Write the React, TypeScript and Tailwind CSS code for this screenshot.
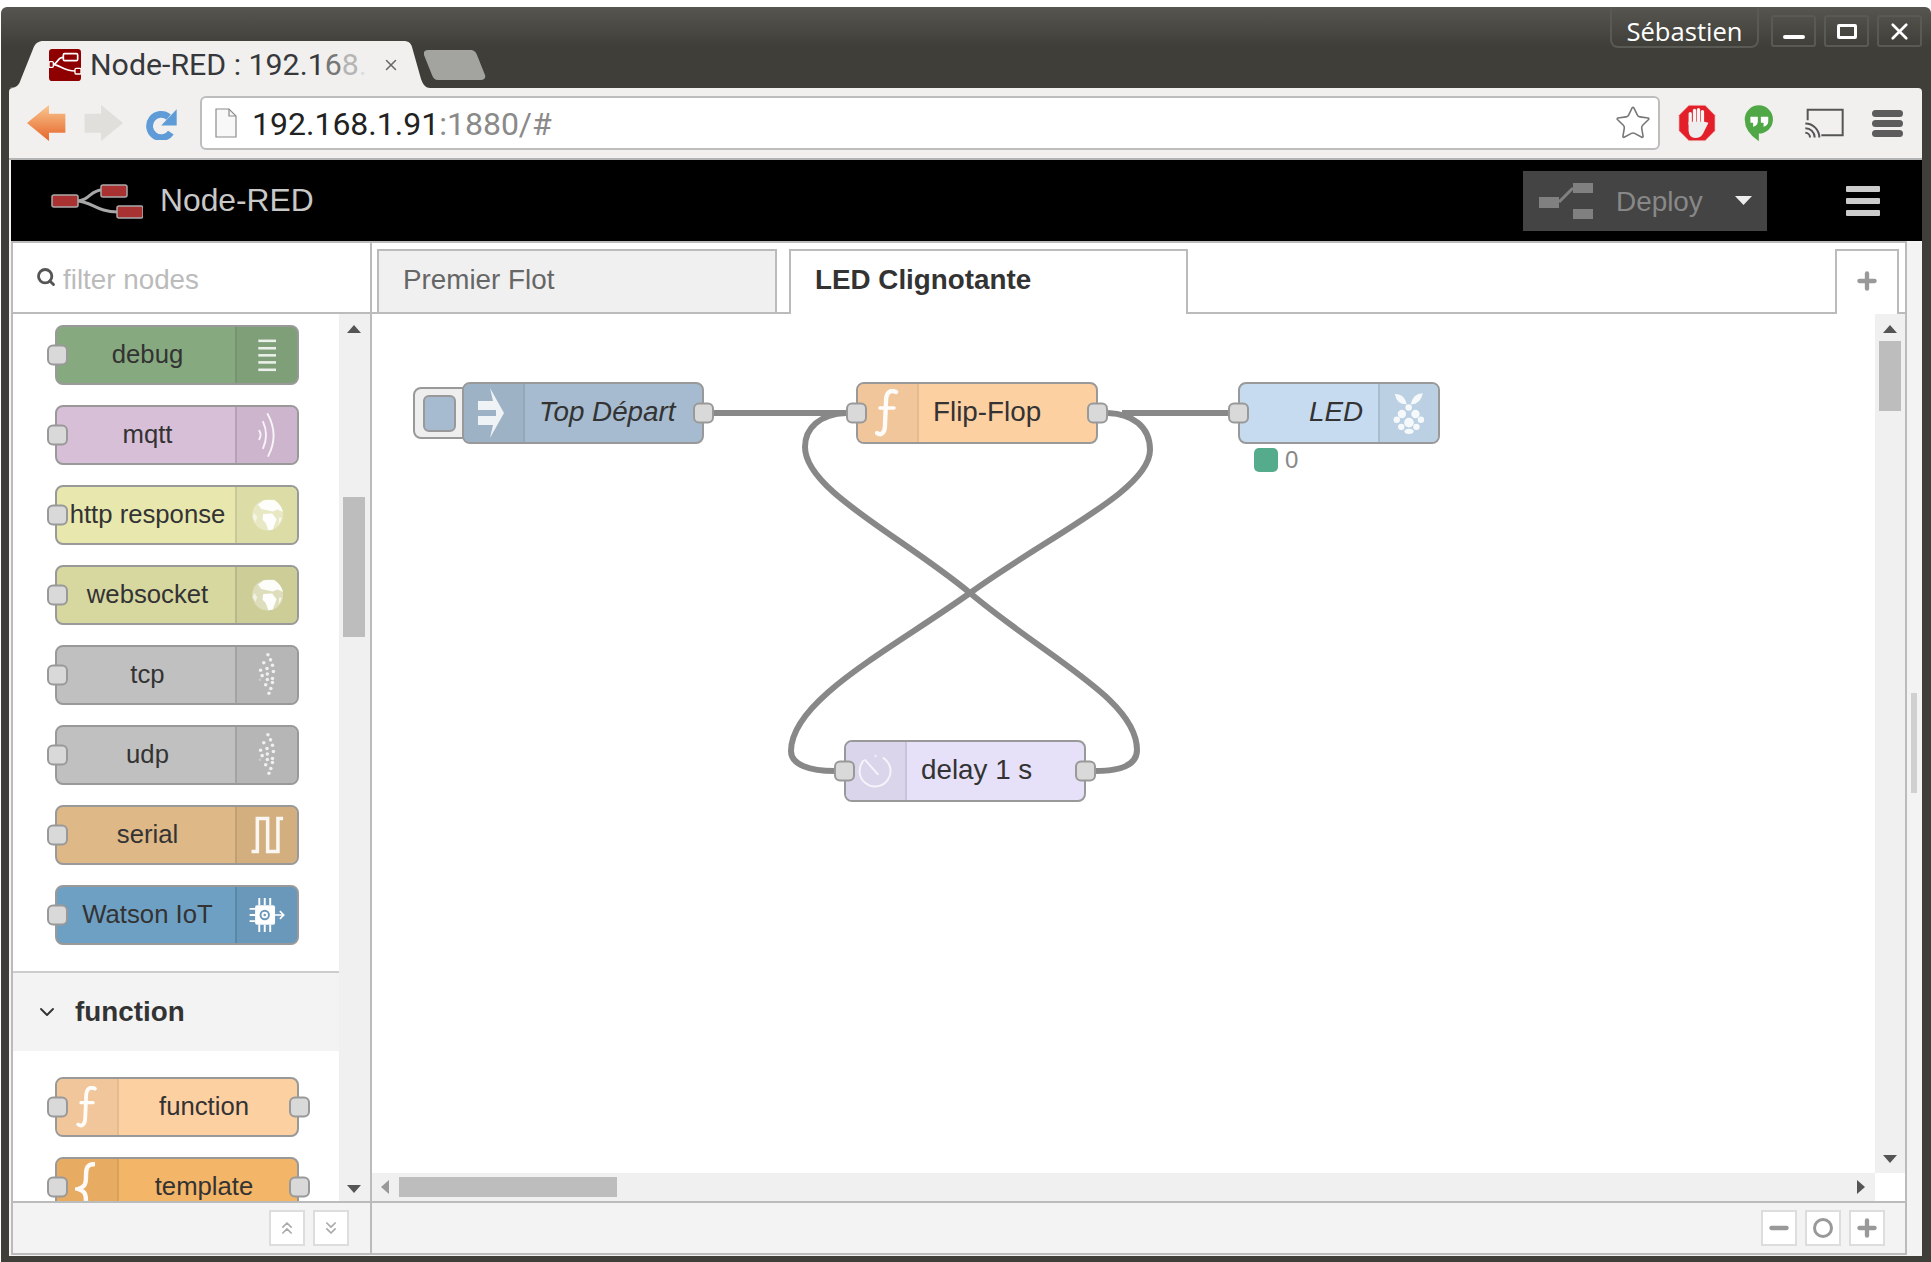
import type { ReactNode } from "react";
import { ChevronDown, ChevronsDown, ChevronsUp, Minus, Plus, Search, Star, X } from "lucide-react";

// Icons are drawn in the coordinates they were measured in, hence the odd viewBoxes.
function FuncIcon({ className }: { className: string }) {
  return (
    <svg viewBox="0 0 24 48" className={className} fill="none" stroke="white" strokeLinecap="round" opacity="0.95">
      <path d="M21 3 C15 0 11 4 11 12 L10 36 C10 44 6 47 2 44" strokeWidth="4.4" />
      <path d="M5 19 H19" strokeWidth="3.6" />
    </svg>
  );
}

function BraceIcon() {
  return (
    <svg viewBox="0 0 24 60" className="mt-[10px] h-[60px] w-[24px]" fill="none" stroke="white" strokeWidth="4.4" opacity="0.95">
      <path d="M20 2 C12 2 11 6 11 14 C11 22 10 25 3 27 C10 29 11 32 11 40 C11 50 12 58 20 58" />
    </svg>
  );
}

function DebugIcon() {
  return (
    <svg viewBox="707 48 186 174" className="h-full w-full" fill="white" opacity="0.85">
      <rect x="773" y="87" width="55" height="8" />
      <rect x="773" y="110" width="55" height="8" />
      <rect x="773" y="132" width="55" height="8" />
      <rect x="773" y="154" width="55" height="8" />
      <rect x="773" y="177" width="55" height="8" />
    </svg>
  );
}

function MqttIcon() {
  return (
    <svg viewBox="707 288 186 174" className="h-full w-full" fill="none" stroke="white" opacity="0.85" strokeLinecap="round">
      <path d="M776 362 Q784 375 776 388" strokeWidth="6" />
      <path d="M788 334 Q806 375 788 416" strokeWidth="6" />
      <path d="M802 310 Q838 375 804 440" strokeWidth="6" />
    </svg>
  );
}

function GlobeIcon() {
  return (
    <svg viewBox="707 528 186 174" className="h-full w-full" fill="white">
      <circle cx="802" cy="615" r="48" opacity="0.35" />
      <path d="M790 569 L822 568 Q844 582 850 606 L832 598 L818 604 L800 600 L782 596 L772 582 Z" opacity="0.9" />
      <path d="M788 612 L816 610 L830 628 L818 660 L804 662 L796 640 L786 630 Z" opacity="0.95" />
      <path d="M760 608 L770 622 L764 636 L756 622 Z" opacity="0.6" />
      <path d="M838 622 L846 624 L836 646 Z" opacity="0.7" />
    </svg>
  );
}

const DOTS = [
  [803, 42], [790, 67], [811, 58], [817, 75], [800, 85], [780, 90], [820, 94], [785, 107],
  [801, 102], [817, 116], [801, 119], [796, 135], [817, 128], [812, 147], [806, 162],
];

function DotsIcon() {
  return (
    <svg viewBox="707 18 186 174" className="h-full w-full" fill="white" opacity="0.8">
      {DOTS.map(([x, y]) => (
        <circle key={`${x}-${y}`} cx={x} cy={y} r="5.5" />
      ))}
      <circle cx="778" cy="120" r="4" opacity="0.4" />
    </svg>
  );
}

function SerialIcon() {
  return (
    <svg viewBox="707 498 186 174" className="h-full w-full" fill="none" stroke="white" strokeWidth="11" opacity="0.9">
      <path d="M752 636 H770 V534 H802 V636 H834 V534 H850" />
    </svg>
  );
}

function WatsonIcon() {
  return (
    <svg viewBox="707 738 186 174" className="h-full w-full">
      <rect x="763" y="795" width="62" height="60" rx="6" fill="white" />
      <path
        d="M776 772 V795 M793 772 V795 M810 772 V795 M776 855 V878 M793 855 V878 M810 855 V878 M746 806 H763 M746 825 H763 M746 844 H763"
        stroke="white"
        strokeWidth="6"
      />
      <circle cx="793" cy="825" r="13" fill="none" stroke="#6998ba" strokeWidth="6" />
      <circle cx="793" cy="825" r="4" fill="#6998ba" />
      <path d="M825 825 H850 M840 813 L852 825 L840 837" fill="none" stroke="white" strokeWidth="5" />
    </svg>
  );
}

function InjectIcon() {
  return (
    <svg viewBox="0 0 30 50" className="h-[50px] w-[30px]" fill="white" opacity="0.85">
      <path d="M14 0 L28 25 L14 50 L17 37 H2 V28 H20 V22 H2 V13 H17 Z" />
    </svg>
  );
}

function RaspberryIcon() {
  return (
    <svg viewBox="537 70 180 174" className="h-full w-full" fill="white" opacity="0.88">
      <path d="M583 98 Q612 96 620 130 Q590 132 583 98 Z" />
      <path d="M670 96 Q640 96 632 130 Q662 132 670 96 Z" />
      <circle cx="626" cy="140" r="10" />
      <circle cx="605" cy="160" r="13" />
      <circle cx="647" cy="160" r="13" />
      <circle cx="589" cy="178" r="10" />
      <circle cx="664" cy="178" r="10" />
      <circle cx="627" cy="187" r="15" />
      <circle cx="603" cy="200" r="10" />
      <circle cx="650" cy="200" r="10" />
      <ellipse cx="627" cy="214" rx="14" ry="8" />
    </svg>
  );
}

function TimerIcon() {
  return (
    <svg viewBox="225 92 180 180" className="h-full w-full" fill="none" stroke="white" opacity="0.75" strokeLinecap="round">
      <path d="M340 142 A48 48 0 1 1 278 150" strokeWidth="6" />
      <path d="M283 148 L322 192" strokeWidth="6" />
      <circle cx="315" cy="135" r="3" fill="white" />
    </svg>
  );
}

function Triangle({ points, className }: { points: string; className: string }) {
  return (
    <svg viewBox="0 0 16 16" preserveAspectRatio="none" className={className}>
      <polygon points={points} fill="currentColor" />
    </svg>
  );
}

function Port({ className }: { className: string }) {
  return (
    <div
      className={
        "absolute top-1/2 z-10 h-[21px] w-[21px] -translate-y-1/2 rounded-[6px] border-2 border-[#999] bg-[#d9d9d9] " +
        className
      }
    />
  );
}

type PaletteItem = {
  label: string;
  color: string;
  iconCell: string;
  icon: ReactNode;
};

const OUTPUT_NODES: PaletteItem[] = [
  { label: "debug", color: "bg-[#87a980]", iconCell: "bg-[#7f9f79] border-[#769472]", icon: <DebugIcon /> },
  { label: "mqtt", color: "bg-[#d8bfd8]", iconCell: "bg-[#cdb5cd] border-[#b5a3b5]", icon: <MqttIcon /> },
  { label: "http response", color: "bg-[#e7e7ae]", iconCell: "bg-[#dcdca6] border-[#c8c89b]", icon: <GlobeIcon /> },
  { label: "websocket", color: "bg-[#d7d7a0]", iconCell: "bg-[#cdcd98] border-[#b8b88f]", icon: <GlobeIcon /> },
  { label: "tcp", color: "bg-[#c0c0c0]", iconCell: "bg-[#b6b6b6] border-[#a3a3a3]", icon: <DotsIcon /> },
  { label: "udp", color: "bg-[#c0c0c0]", iconCell: "bg-[#b6b6b6] border-[#a3a3a3]", icon: <DotsIcon /> },
  { label: "serial", color: "bg-[#deb887]", iconCell: "bg-[#d3af80] border-[#c09f75]", icon: <SerialIcon /> },
  { label: "Watson IoT", color: "bg-[#6ea0c4]", iconCell: "bg-[#6998ba] border-[#5c88a8]", icon: <WatsonIcon /> },
];

function OutputNode({ item }: { item: PaletteItem }) {
  return (
    <div className={"relative ml-[42px] flex h-[60px] w-[244px] flex-none rounded-[8px] border-2 border-[#999] " + item.color}>
      <Port className="-left-[10px]" />
      <div className="flex flex-1 items-center justify-center pb-[2px] pl-[3px] text-[25.7px] text-[#333]">{item.label}</div>
      <div className={"h-full w-[62px] rounded-r-[6px] border-l-2 " + item.iconCell}>{item.icon}</div>
    </div>
  );
}

function FunctionNode({ label, color, iconCell, icon }: PaletteItem) {
  return (
    <div className={"relative ml-[42px] flex h-[60px] w-[244px] flex-none rounded-[8px] border-2 border-[#999] " + color}>
      <Port className="-left-[10px]" />
      <Port className="-right-[13px]" />
      <div className={"flex h-full w-[62px] items-center justify-center rounded-l-[6px] border-r-2 " + iconCell}>{icon}</div>
      <div className="flex flex-1 items-center justify-center pb-[2px] pr-[8px] text-[25.7px] text-[#333]">{label}</div>
    </div>
  );
}

function SquareButton({ children }: { children: ReactNode }) {
  return (
    <div className="flex h-[36px] w-[36px] items-center justify-center border-2 border-[#ddd] bg-white text-[#999]">{children}</div>
  );
}

function TitleBar() {
  return (
    <div className="flex h-[81px] flex-none">
      <div className="relative ml-[8px] mt-[34px] flex h-[47px] w-[421px] items-start pl-[40px] pt-[8px]">
        <svg viewBox="0 0 421 47" className="absolute inset-0 h-full w-full">
          <path
            d="M0 47 C8 47 10 44 12 38 L24 8 C26 2 30 0 34 0 L395 0 C399 0 402 2 403 6 L412 38 C414 44 417 47 421 47 Z"
            fill="#f1f0ee"
          />
        </svg>
        <svg viewBox="147 57 96 96" className="relative h-[32px] w-[32px]">
          <rect x="147" y="57" width="96" height="96" rx="10" fill="#8f0000" />
          <path
            d="M158 103 C175 103 170 82 190 82 M158 103 C178 103 190 123 225 123"
            fill="none"
            stroke="white"
            strokeWidth="5"
          />
          <rect x="190" y="71" width="43" height="21" rx="4" fill="#8f0000" stroke="white" strokeWidth="5" />
          <rect x="147" y="95" width="13" height="17" rx="3" fill="#8f0000" stroke="white" strokeWidth="4" />
          <rect x="225" y="115" width="18" height="17" rx="3" fill="#8f0000" stroke="white" strokeWidth="4" />
        </svg>
        <span className="relative ml-[9px] whitespace-nowrap font-['Roboto',sans-serif] text-[30.3px] leading-[32px] text-[#36383c]">
          Node-RED : 192.1<span className="text-[#777]">6</span>
          <span className="text-[#b5b5b5]">8</span>
          <span className="text-[#ddd]">.</span>
        </span>
        <X className="absolute left-[373px] top-[15px] h-[18px] w-[18px] text-[#666]" strokeWidth={2} />
      </div>
      <svg viewBox="0 0 62 30" className="ml-[-6px] mt-[43px] h-[30px] w-[62px]">
        <path d="M4 0 H46 C50 0 52 2 53 5 L61 25 C62 28 60 30 57 30 H14 C11 30 9 28 8 25 L0 5 C-1 2 1 0 4 0 Z" fill="#a3a3a0" />
      </svg>
      <div className="ml-auto flex items-start font-['Open_Sans',sans-serif]">
        <div className="flex h-[41px] w-[149px] items-center justify-center rounded-b-[8px] border-2 border-t-0 border-[#5a5a54] pt-[11px] text-[25.6px] text-white">
          Sébastien
        </div>
        <div className="ml-[12px] mt-[8px] flex gap-[8px] pr-[9px]">
          <div className="flex h-[32px] w-[45px] items-end justify-center rounded-[3px] border-2 border-[#5a5a54] pb-[6px]">
            <div className="h-[4px] w-[22px] rounded-sm bg-white" />
          </div>
          <div className="flex h-[32px] w-[45px] items-center justify-center rounded-[3px] border-2 border-[#5a5a54]">
            <div className="h-[15px] w-[20px] rounded-[2px] border-[3px] border-white" />
          </div>
          <div className="flex h-[32px] w-[45px] items-center justify-center rounded-[3px] border-2 border-[#5a5a54]">
            <X className="h-[27px] w-[27px] text-white" strokeWidth={2.4} />
          </div>
        </div>
      </div>
    </div>
  );
}

function Toolbar() {
  return (
    <div className="ml-[8px] flex h-[72px] w-[1913px] flex-none items-center rounded-t-[4px] border-b-2 border-[#b4b4b4] bg-[#f1f0ee] pl-[17px]">
      <svg viewBox="75 220 125 120" className="h-[40px] w-[41px] flex-none">
        <defs>
          <linearGradient id="back" x1="0" y1="0" x2="0" y2="1">
            <stop offset="0" stopColor="#f9c78f" />
            <stop offset="1" stopColor="#e6642a" />
          </linearGradient>
        </defs>
        <polygon points="78,280 145,225 145,252 195,252 195,310 145,310 145,335" fill="url(#back)" />
      </svg>
      <svg viewBox="250 220 125 120" className="ml-[16px] h-[40px] w-[41px] flex-none">
        <polygon points="372,280 305,225 305,252 255,252 255,310 305,310 305,335" fill="#e0dfdc" />
      </svg>
      <svg viewBox="432 232 102 100" className="ml-[21px] h-[33px] w-[33px] flex-none">
        <path d="M505 262 A36 36 0 1 0 512 310" fill="none" stroke="#5f9bd6" strokeWidth="21" />
        <polygon points="530,238 530,288 482,288" fill="#5f9bd6" />
      </svg>
      <div className="ml-[22px] flex h-[54px] w-[1460px] flex-none items-center rounded-[6px] border-2 border-[#bdbdbd] bg-white pl-[13px] pr-[6px] font-['Roboto',sans-serif]">
        <svg viewBox="0 0 22 30" className="h-[30px] w-[22px] flex-none">
          <path d="M1 1 H14 L21 8 V29 H1 Z" fill="#f8f8f8" stroke="#8c8c8c" strokeWidth="1.2" />
          <path d="M14 1 V8 H21" fill="none" stroke="#8c8c8c" strokeWidth="1.2" />
        </svg>
        <span className="ml-[15px] pt-[2px] text-[32px] leading-none text-[#222]">
          192.168.1.91<span className="text-[#8a8a8a]">:1880/#</span>
        </span>
        <Star className="ml-auto h-[38px] w-[38px] text-[#777]" strokeWidth={1} />
      </div>
      <svg viewBox="50 32 115 113" className="ml-[18px] h-[38px] w-[38px] flex-none">
        <polygon points="83,35 132,35 162,65 162,112 132,142 83,142 53,112 53,65" fill="#e3202a" stroke="#f3c0c0" strokeWidth="2" />
        <path
          d="M87 60 V92 M100 50 V90 M112 48 V90 M124 54 V92"
          stroke="#f4f4f4"
          strokeWidth="10"
          strokeLinecap="round"
        />
        <path d="M82 85 H130 L142 88 L126 120 Q118 134 102 134 Q84 134 82 112 Z" fill="#eeeeee" />
      </svg>
      <svg viewBox="250 32 95 113" className="ml-[27px] h-[38px] w-[32px] flex-none">
        <path d="M297 36 A42 42 0 0 1 297 120 V143 Q255 115 255 78 A42 42 0 0 1 297 36 Z" fill="#4fa845" />
        <path d="M272 70 H294 V84 Q294 96 280 100 V88 H272 Z M303 70 H325 V84 Q325 96 311 100 V88 H303 Z" fill="white" />
      </svg>
      <svg viewBox="432 42 120 92" className="ml-[29px] h-[31px] w-[40px] flex-none">
        <path d="M443 78 V47 H548 V123 H484" fill="none" stroke="#555" strokeWidth="6" />
        <path d="M436 88 A42 42 0 0 1 478 130 M436 102 A28 28 0 0 1 464 130 M436 116 A14 14 0 0 1 450 130" fill="none" stroke="#555" strokeWidth="6" />
      </svg>
      <div className="ml-[28px] flex w-[31px] flex-none flex-col gap-[3px]">
        <div className="h-[7px] rounded-full bg-[#5c5c5c]" />
        <div className="h-[7px] rounded-full bg-[#5c5c5c]" />
        <div className="h-[7px] rounded-full bg-[#5c5c5c]" />
      </div>
    </div>
  );
}

function AppHeader() {
  return (
    <div className="ml-[8px] flex h-[81px] w-[1913px] flex-none items-center border-l-2 border-[#f3f3f3] bg-black pl-[40px] pr-[42px]">
      <svg viewBox="51 185 92 36" className="h-[36px] w-[92px] flex-none">
        <path d="M76 203 C90 203 90 192 102 192 M76 203 C92 203 96 214 118 214" fill="none" stroke="#a8a8a8" strokeWidth="3" />
        <rect x="52" y="197" width="26" height="12" rx="2" fill="#a83232" stroke="#aaa" strokeWidth="1.5" />
        <rect x="101" y="187" width="26" height="12" rx="2" fill="#a83232" stroke="#aaa" strokeWidth="1.5" />
        <rect x="117" y="208" width="26" height="12" rx="2" fill="#a83232" stroke="#aaa" strokeWidth="1.5" />
      </svg>
      <span className="ml-[17px] text-[31.8px] text-[#c8c8c8]">Node-RED</span>
      <div className="ml-auto flex h-[60px] w-[244px] items-center bg-[#444] pl-[16px] text-[27.9px] text-[#888]">
        <svg viewBox="0 0 54 36" className="h-[36px] w-[54px] flex-none" fill="#808080">
          <rect x="0" y="14" width="20" height="11" />
          <rect x="34" y="0" width="20" height="10" />
          <rect x="34" y="26" width="20" height="10" />
          <path d="M20 19 L34 5" stroke="#808080" strokeWidth="3" />
        </svg>
        <span className="ml-[23px] pt-[2px]">Deploy</span>
        <Triangle points="0,0 16,0 8,16" className="ml-[32px] h-[9px] w-[17px] text-[#eee]" />
      </div>
      <div className="ml-[79px] flex w-[34px] flex-col gap-[6px]">
        <div className="h-[6px] rounded-[1px] bg-[#ccc]" />
        <div className="h-[6px] rounded-[1px] bg-[#ccc]" />
        <div className="h-[6px] rounded-[1px] bg-[#ccc]" />
      </div>
    </div>
  );
}

function Sidebar() {
  return (
    <div className="flex w-[359px] flex-none flex-col border-r-2 border-[#bbb]">
      <div className="flex h-[71px] flex-none items-center border-b-2 border-[#bbb] bg-white pl-[23px] text-[27.8px] text-[#bbb]">
        <Search className="-mt-[2px] h-[20px] w-[20px] text-[#555]" strokeWidth={3.4} />
        <span className="ml-[7px] mt-[4px]">filter nodes</span>
      </div>
      <div className="flex h-[887px] flex-none">
        <div className="w-[326px] flex-none overflow-hidden bg-white pt-[11px]">
          <div className="flex flex-col gap-[20px]">
            {OUTPUT_NODES.map((item) => (
              <OutputNode key={item.label} item={item} />
            ))}
          </div>
          <div className="mt-[26px] flex h-[80px] items-center border-t-2 border-[#ccc] bg-[#f3f3f3] pl-[22px] text-[#333]">
            <ChevronDown className="h-[24px] w-[24px]" strokeWidth={1.9} />
            <span className="ml-[16px] text-[27.8px] font-bold">function</span>
          </div>
          <div className="mt-[26px] flex flex-col gap-[20px]">
            <FunctionNode label="function" color="bg-[#fdd0a2]" iconCell="bg-[#f0c69a] border-[#e4bc92]" icon={<FuncIcon className="h-[42px] w-[22px]" />} />
            <FunctionNode label="template" color="bg-[#f3b567]" iconCell="bg-[#e7ac62] border-[#d9a25b]" icon={<BraceIcon />} />
          </div>
        </div>
        <div className="flex w-[31px] flex-none flex-col items-center bg-[#f0f0f0] pb-[8px] pr-[2px] pt-[11px] text-[#555]">
          <Triangle points="8,0 16,16 0,16" className="h-[8px] w-[14px]" />
          <div className="mt-[164px] h-[140px] w-[22px] bg-[#bdbdbd]" />
          <Triangle points="0,0 16,0 8,16" className="mt-auto h-[8px] w-[14px]" />
        </div>
      </div>
      <div className="flex h-[52px] flex-none items-center justify-end gap-[8px] border-t-2 border-[#bbb] bg-[#f3f3f3] pr-[21px]">
        <SquareButton>
          <ChevronsUp className="h-[20px] w-[20px] text-[#aaa]" strokeWidth={2} />
        </SquareButton>
        <SquareButton>
          <ChevronsDown className="h-[20px] w-[20px] text-[#aaa]" strokeWidth={2} />
        </SquareButton>
      </div>
    </div>
  );
}

function Wires() {
  return (
    <svg className="absolute inset-0 h-full w-full" fill="none" stroke="#888" strokeWidth="6">
      <g transform="translate(-372 -314)">
        <path d="M714 413 H846" />
        <path d="M1122 413 H1228" />
        <path d="M1108 413 C1132 414 1150 426 1150 450 C1150 490 1050 535 970 593 C890 650 791 700 791 751 C791 765 810 771 835 771" />
        <path d="M846 413 C820 414 805 428 805 447 C805 490 900 535 970 593 C1050 660 1137 700 1137 750 C1137 765 1120 771 1095 771" />
      </g>
    </svg>
  );
}

function FlowNode({
  className,
  children,
}: {
  className: string;
  children: ReactNode;
}) {
  return (
    <div className={"absolute flex h-[62px] rounded-[8px] border-2 border-[#999] text-[27.8px] text-[#333] " + className}>
      {children}
    </div>
  );
}

function Canvas() {
  return (
    <div className="relative flex-1 overflow-hidden bg-white">
      <Wires />

      <div className="absolute left-[41px] top-[73px] flex h-[52px] w-[56px] items-center rounded-l-[8px] border-2 border-[#999] bg-[#eee] pl-[8px]">
        <div className="h-[37px] w-[33px] rounded-[6px] border-2 border-[#999] bg-[#a6bbcf]" />
      </div>
      <FlowNode className="left-[90px] top-[68px] w-[242px] bg-[#a6bbcf]">
        <Port className="-right-[12px]" />
        <div className="flex h-full w-[61px] flex-none items-center justify-center rounded-l-[6px] border-r-2 border-[#94a8bb] bg-[#9eb2c5] pr-[6px]">
          <InjectIcon />
        </div>
        <span className="ml-[14px] self-center pb-[2px] italic">Top Départ</span>
      </FlowNode>

      <FlowNode className="left-[484px] top-[68px] w-[242px] bg-[#fdd0a2]">
        <Port className="-left-[12px]" />
        <Port className="-right-[12px]" />
        <div className="flex h-full w-[61px] flex-none items-center justify-center rounded-l-[6px] border-r-2 border-[#e4bc92] bg-[#f0c69a] pr-[2px]">
          <FuncIcon className="h-[48px] w-[24px]" />
        </div>
        <span className="ml-[14px] self-center pb-[2px]">Flip-Flop</span>
      </FlowNode>

      <FlowNode className="left-[866px] top-[68px] w-[202px] bg-[#c6dbef]">
        <Port className="-left-[12px]" />
        <div className="flex flex-1 items-center justify-end pb-[2px] pr-[15px] italic">LED</div>
        <div className="h-full w-[60px] flex-none rounded-r-[6px] border-l-2 border-[#a9bdd1] bg-[#bcd0e3]">
          <RaspberryIcon />
        </div>
      </FlowNode>
      <div className="absolute left-[882px] top-[134px] flex items-center">
        <div className="h-[24px] w-[24px] rounded-[5px] bg-[#55ac8c]" />
        <span className="ml-[7px] text-[24px] leading-[24px] text-[#888]">0</span>
      </div>

      <FlowNode className="left-[472px] top-[426px] w-[242px] bg-[#e6e0f8]">
        <Port className="-left-[12px]" />
        <Port className="-right-[12px]" />
        <div className="h-full w-[61px] flex-none rounded-l-[6px] border-r-2 border-[#c9c3da] bg-[#dbd5ec]">
          <TimerIcon />
        </div>
        <span className="ml-[14px] self-center pb-[2px]">delay 1 s</span>
      </FlowNode>
    </div>
  );
}

function Workspace() {
  return (
    <div className="flex min-w-0 flex-1 flex-col">
      <div className="flex h-[71px] flex-none items-end gap-[12px] border-b-2 border-[#bbb] bg-white pl-[5px] text-[27.8px]">
        <div className="flex h-[63px] w-[400px] items-center border-2 border-b-0 border-[#bbb] bg-[#f0f0f0] pb-[4px] pl-[24px] text-[#666]">
          Premier Flot
        </div>
        <div className="-mb-[2px] flex h-[65px] w-[399px] items-center border-2 border-b-0 border-[#bbb] bg-white pb-[6px] pl-[24px] font-bold text-[#333]">
          LED Clignotante
        </div>
        <div className="-mb-[2px] ml-auto mr-[6px] flex h-[65px] w-[64px] items-center justify-center border-2 border-b-0 border-[#bbb] bg-white pb-[3px] text-[#999]">
          <Plus className="h-[26px] w-[26px]" strokeWidth={4} />
        </div>
      </div>
      <div className="flex h-[859px] flex-none">
        <Canvas />
        <div className="flex w-[30px] flex-none flex-col items-center bg-[#f0f0f0] pb-[10px] pt-[11px] text-[#555]">
          <Triangle points="8,0 16,16 0,16" className="h-[8px] w-[14px]" />
          <div className="mt-[8px] h-[70px] w-[22px] bg-[#bdbdbd]" />
          <Triangle points="0,0 16,0 8,16" className="mt-auto h-[8px] w-[14px]" />
        </div>
      </div>
      <div className="flex h-[28px] flex-none">
        <div className="flex flex-1 items-center bg-[#f0f0f0] pl-[9px] pr-[10px]">
          <Triangle points="16,0 16,16 0,8" className="h-[14px] w-[8px] text-[#999]" />
          <div className="ml-[10px] h-[20px] w-[218px] bg-[#bdbdbd]" />
          <Triangle points="0,0 16,8 0,16" className="ml-auto h-[14px] w-[8px] text-[#555]" />
        </div>
        <div className="w-[30px] flex-none bg-white" />
      </div>
      <div className="flex h-[52px] flex-none items-center justify-end gap-[8px] border-t-2 border-[#bbb] bg-[#f3f3f3] pr-[20px]">
        <SquareButton>
          <Minus className="h-[26px] w-[26px]" strokeWidth={4} />
        </SquareButton>
        <SquareButton>
          <div className="h-[20px] w-[20px] rounded-full border-[3px] border-[#999]" />
        </SquareButton>
        <SquareButton>
          <Plus className="h-[26px] w-[26px]" strokeWidth={4} />
        </SquareButton>
      </div>
    </div>
  );
}

export default function App() {
  return (
    <div className="h-[1262px] w-[1931px] overflow-hidden bg-white pl-[1px] pt-[7px] font-['Liberation_Sans',sans-serif]">
      <div className="flex h-[1255px] w-[1930px] flex-col rounded-t-[6px] bg-[linear-gradient(to_bottom,#56554f_0px,#3f3e39_40px)]">
        <TitleBar />
        <Toolbar />
        <AppHeader />
        <div className="ml-[8px] flex h-[1015px] w-[1913px] flex-none bg-[#f3f3f3] pl-[2px]">
          <div className="flex h-[1014px] w-[1896px] flex-none border-2 border-[#bbb]">
            <Sidebar />
            <Workspace />
          </div>
          <div className="w-[15px] flex-none pl-[4px] pt-[452px]">
            <div className="h-[100px] w-[6px] bg-[#d0d0d0]" />
          </div>
        </div>
      </div>
    </div>
  );
}
